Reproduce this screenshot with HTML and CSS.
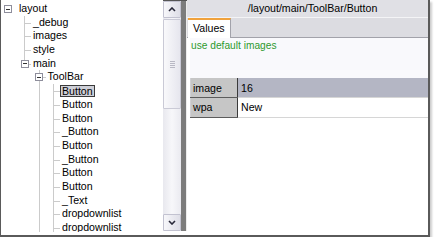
FILE: index.html
```html
<!DOCTYPE html>
<html lang="en">
<head>
  <meta charset="UTF-8" />
  <meta name="viewport" content="width=device-width, initial-scale=1.0" />
  <title>Skin Browser</title>
  <link rel="stylesheet" href="styles.css">
</head>
<body>
  <div class="window">
    <div class="tree">
      <ul>
        <li class="root">
          <div class="row"><span class="box"></span><span class="label">layout</span></div>
          <ul>
            <li><div class="row"><span class="label">_debug</span></div></li>
            <li><div class="row"><span class="label">images</span></div></li>
            <li><div class="row"><span class="label">style</span></div></li>
            <li class="last">
              <div class="row"><span class="box"></span><span class="label">main</span></div>
              <ul>
                <li>
                  <div class="row"><span class="box"></span><span class="label">ToolBar</span></div>
                  <ul>
                    <li><div class="row"><span class="label sel">Button</span></div></li>
                    <li><div class="row"><span class="label">Button</span></div></li>
                    <li><div class="row"><span class="label">Button</span></div></li>
                    <li><div class="row"><span class="label">_Button</span></div></li>
                    <li><div class="row"><span class="label">Button</span></div></li>
                    <li><div class="row"><span class="label">_Button</span></div></li>
                    <li><div class="row"><span class="label">Button</span></div></li>
                    <li><div class="row"><span class="label">Button</span></div></li>
                    <li><div class="row"><span class="label">_Text</span></div></li>
                    <li><div class="row"><span class="label">dropdownlist</span></div></li>
                    <li><div class="row"><span class="label">dropdownlist</span></div></li>
                  </ul>
                </li>
              </ul>
            </li>
          </ul>
        </li>
      </ul>
    </div>

    <div class="vscroll">
      <div class="arrow">
        <svg width="8" height="5" viewBox="0 0 8 5"><path d="M1 4 L4 1 L7 4" fill="none" stroke="#2a2a3a" stroke-width="1.6"/></svg>
      </div>
      <div class="track">
        <div class="thumb"><span class="grip"></span></div>
      </div>
      <div class="arrow">
        <svg width="8" height="5" viewBox="0 0 8 5"><path d="M1 1 L4 4 L7 1" fill="none" stroke="#2a2a3a" stroke-width="1.6"/></svg>
      </div>
    </div>

    <div class="splitter"></div>

    <div class="detail">
      <div class="path">/layout/main/ToolBar/Button</div>
      <div class="tabs">
        <div class="tab">Values</div>
      </div>
      <div class="content">
        <div class="desc">use default images</div>
        <table class="props">
          <tr class="current">
            <td class="name">image</td>
            <td class="value">16</td>
          </tr>
          <tr>
            <td class="name">wpa</td>
            <td class="value">New</td>
          </tr>
        </table>
      </div>
    </div>
  </div>
</body>
</html>
```

FILE: styles.css
```css
* {
  box-sizing: border-box;
}
body {
  margin: 0;
  background: #fff;
  color: #000;
  font-family: "Liberation Sans", Arial, sans-serif;
  font-size: 10.6px;
}
.window {
  display: flex;
  width: 430px;
  height: 237px;
  background: #fff;
  border-left: 1px solid #5a5a5a;
  border-right: 2px solid #5a5a5a;
  border-bottom: 2px solid #5a5a5a;
  box-shadow: 2px 2px 2px rgba(0,0,0,0.2);
}

/* tree */
.tree {
  width: 162px;
  height: 232px;
  padding-top: 2px;
  overflow: hidden;
  flex-shrink: 0;
}
.tree ul {
  list-style: none;
  margin: 0;
  padding: 0;
}
.tree ul ul {
  margin-left: 14.5px;
}
.tree .root > ul {
  margin-left: 14px;
}
.tree li {
  position: relative;
}
.tree li li::before {
  content: "";
  position: absolute;
  left: 9px;
  top: 0;
  bottom: 0;
  border-left: 1px solid #cbcbcb;
}
.tree li li.last::before {
  bottom: auto;
  height: 7px;
}
.row {
  position: relative;
  height: 13.7px;
  line-height: 13.7px;
  padding-left: 18px;
  white-space: nowrap;
}
.tree li li > .row::before {
  content: "";
  position: absolute;
  left: 9px;
  top: 7px;
  width: 7px;
  border-top: 1px solid #cbcbcb;
}
.box {
  position: absolute;
  left: 5.5px;
  top: 3px;
  width: 8px;
  height: 8px;
  border: 1px solid #8e8e9c;
  background: #fff;
  z-index: 1;
}
.box::after {
  content: "";
  position: absolute;
  left: 1px;
  right: 1px;
  top: 2.5px;
  height: 1px;
  background: #333;
}
.root > .row .box {
  left: 3px;
}
.label.sel {
  display: inline-block;
  margin-left: -2px;
  padding: 0 1px;
  height: 12px;
  line-height: 10px;
  vertical-align: middle;
  border: 1px solid #3a3a3a;
  background: #cfd0d8;
}

/* scrollbar */
.vscroll {
  width: 18px;
  height: 231px;
  flex-shrink: 0;
  display: flex;
  flex-direction: column;
  border-top: 1px solid #555;
  background: linear-gradient(to right, #e8e8ee, #f7f7fa 50%, #eaeaf0);
}
.arrow {
  height: 17px;
  display: flex;
  align-items: center;
  justify-content: center;
  border: 1px solid #c2c2d0;
  border-radius: 1px;
  background: linear-gradient(to right, #f7f7fa, #dedee7);
}
.track {
  flex: 1;
  padding-top: 1px;
}
.thumb {
  height: 90px;
  display: flex;
  align-items: center;
  justify-content: center;
  border: 1px solid #cacad6;
  border-radius: 1px;
  background: linear-gradient(to right, #f9f9fb, #e6e6ee);
}
.grip {
  width: 5px;
  height: 7px;
  background: repeating-linear-gradient(to bottom, #b8b8c4 0 1px, transparent 1px 2px);
}
.splitter {
  width: 6px;
  height: 231px;
  flex-shrink: 0;
  border-top: 1px solid #555;
  background: linear-gradient(to right, #7c7c7c 0 5px, #ececec 5px);
}

/* detail pane */
.detail {
  flex: 1;
  display: flex;
  flex-direction: column;
  min-width: 0;
}
.path {
  height: 18px;
  line-height: 17px;
  padding-left: 10px;
  text-align: center;
  background: #e0e0e5;
  border-bottom: 1px solid #f4f4f6;
}
.tabs {
  height: 20px;
  display: flex;
  background: #dcdce1;
  border-bottom: 1px solid #a2a2aa;
}
.tab {
  margin-left: 1px;
  margin-bottom: -1px;
  padding: 0 5px;
  line-height: 16px;
  background: #fff;
  border-top: 2px solid #f0a23c;
  border-right: 1px solid #a2a2aa;
}
.content {
  flex: 1;
  padding-left: 3px;
}
.desc {
  height: 40px;
  padding: 2px 0 0 1px;
  line-height: 12px;
  font-size: 10.2px;
  color: #2e9a2e;
  background: #f9f9fc;
}
.props {
  width: 100%;
  border-collapse: collapse;
  border-left: 1px solid #d0d0d4;
}
.props td {
  height: 19.5px;
  padding: 0 0 0 2px;
}
.props .name {
  width: 47px;
  background: #c6c6c6;
  border-right: 1px solid #3a3a3a;
  border-bottom: 1px solid #5c5c5c;
}
.props .value {
  padding-left: 3px;
  border-bottom: 1px solid #d6d6d6;
}
.props .current .value {
  background: #b4b6c4;
}
```
